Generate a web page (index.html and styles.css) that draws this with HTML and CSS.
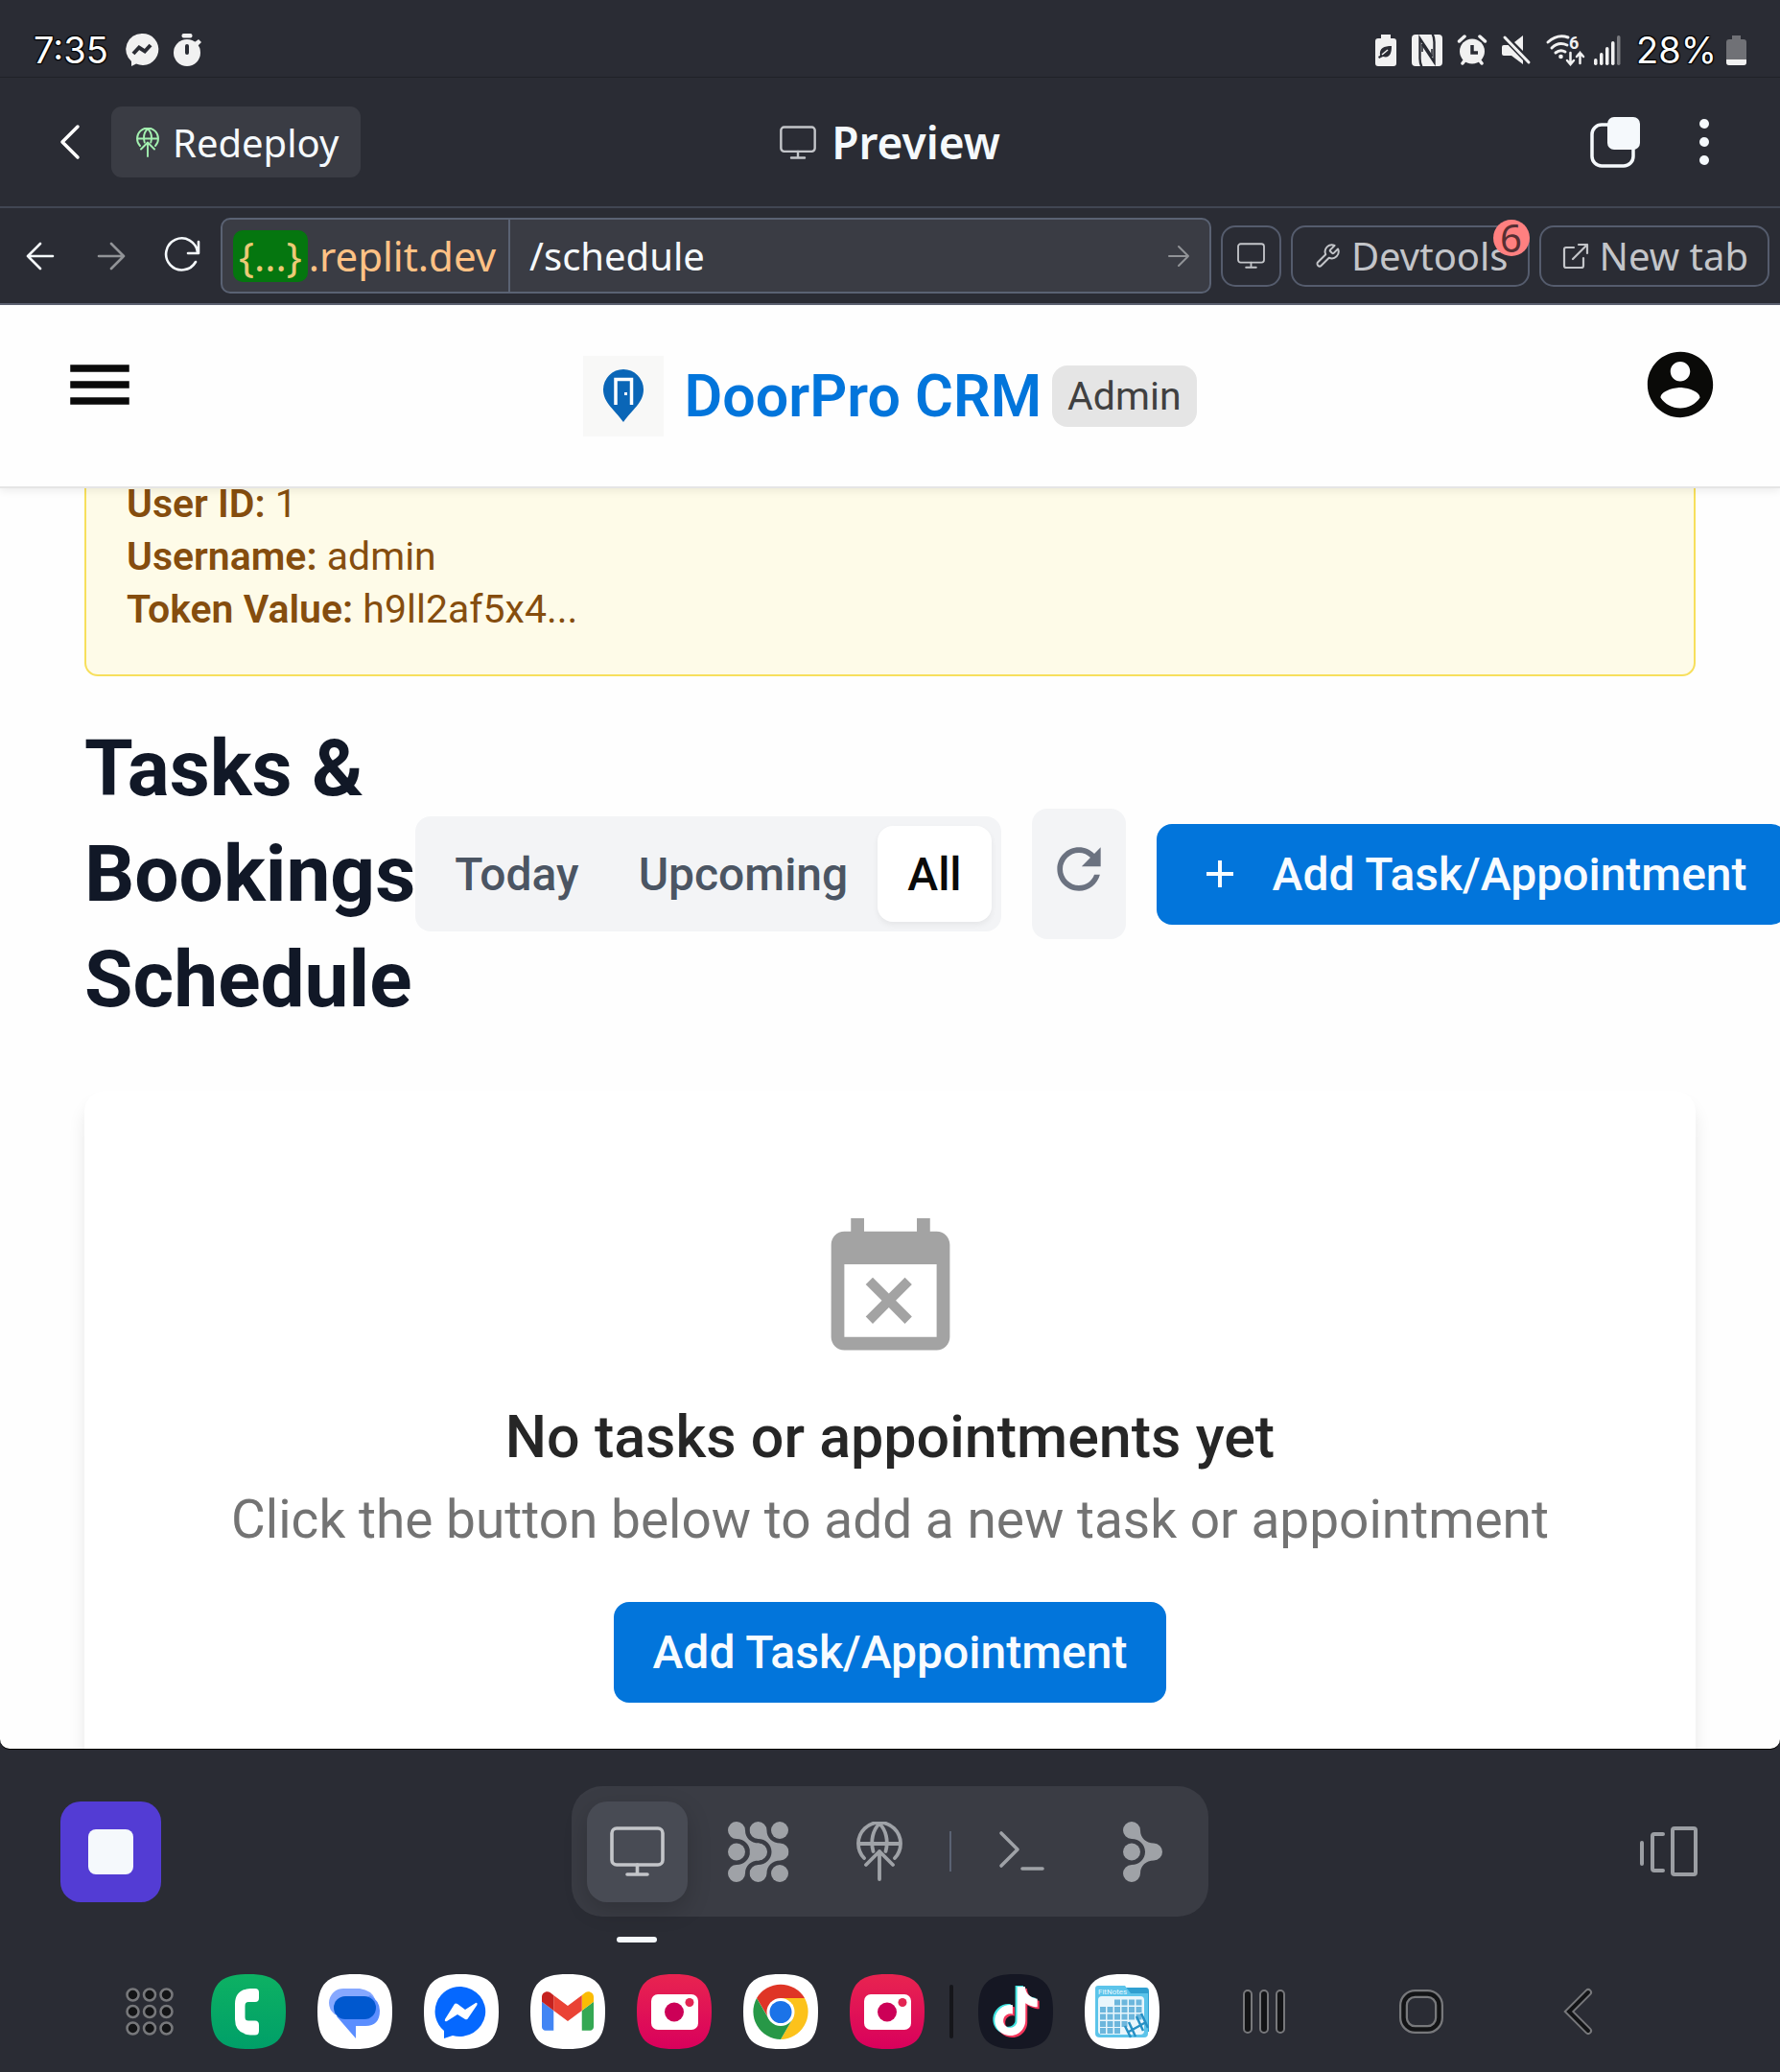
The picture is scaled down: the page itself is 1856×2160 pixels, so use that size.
FILE: index.html
```html
<!DOCTYPE html>
<html lang="en">
<head>
<meta charset="utf-8">
<meta name="viewport" content="width=device-width, initial-scale=1">
<title>Preview - DoorPro CRM</title>
<link rel="stylesheet" href="styles.css">
</head>
<body>
<svg class="defs" aria-hidden="true">
  <symbol id="monitor" viewBox="0 0 57 52"><g fill="none" stroke="currentColor" stroke-width="3.6" stroke-linecap="round"><rect x="2" y="2" width="53" height="38" rx="5"/><path d="M28.500 40v9M18 50h21"/></g></symbol>
  <symbol id="deploy" viewBox="0 0 48 62"><g fill="none" stroke="currentColor" stroke-width="3.800" stroke-linecap="round" stroke-linejoin="round"><path d="M8 38A22 22 0 1 1 40 38M2 23h44M17.500 31C14.500 20 17 9 24 2C31 9 33.500 20 30.500 31M24 31v29M10 45L24 31L38 45"/></g></symbol>
  <symbol id="branch" viewBox="0 0 41 63"><path fill="currentColor" d="M9 0A9 9 0 0 1 18 9C18 17 24 22.500 32 22.500A9 9 0 0 1 32 40.500C24 40.500 18 46 18 54A9 9 0 1 1 9 45C17 45 23 39 23 31.500C23 24 17 18 9 18A9 9 0 1 1 9 0Z"/><circle cx="9" cy="31.500" r="9" fill="currentColor"/></symbol>
  <symbol id="squircle" viewBox="0 0 78 78"><path fill="currentColor" d="M39 0C68 0 78 10 78 39S68 78 39 78 0 68 0 39 10 0 39 0Z"/></symbol>
  <symbol id="note" viewBox="0 0 24 24"><path fill="currentColor" d="M12.525.02c1.310-.02 2.610-.01 3.910-.02.08 1.530.63 3.090 1.750 4.170 1.120 1.110 2.700 1.620 4.240 1.790v4.030c-1.440-.05-2.890-.35-4.200-.97-.57-.26-1.100-.59-1.620-.93-.01 2.920.01 5.840-.02 8.750-.08 1.400-.54 2.790-1.350 3.940-1.310 1.920-3.580 3.170-5.910 3.210-1.430.08-2.860-.31-4.080-1.030-2.020-1.190-3.440-3.370-3.650-5.710-.02-.5-.03-1-.01-1.490.18-1.900 1.120-3.720 2.580-4.960 1.660-1.440 3.980-2.130 6.150-1.720.02 1.480-.04 2.960-.04 4.440-.99-.32-2.150-.23-3.020.37-.63.41-1.110 1.040-1.360 1.750-.21.51-.15 1.070-.14 1.610.24 1.640 1.820 3.020 3.500 2.870 1.120-.01 2.190-.66 2.770-1.610.19-.33.4-.67.41-1.060.1-1.790.06-3.570.07-5.360.01-4.030-.01-8.050.02-12.070z"/></symbol>
  <symbol id="camera-app" viewBox="0 0 78 78"><path fill="url(#cam)" d="M39 0C68 0 78 10 78 39S68 78 39 78 0 68 0 39 10 0 39 0Z"/><rect x="15" y="21" width="49" height="37" rx="7" fill="#fff"/><circle cx="39" cy="39.500" r="10" fill="#cc0057"/><circle cx="55" cy="29.500" r="4.500" fill="#e32553"/></symbol>
  <linearGradient id="cam" x1="0" y1="0" x2="0" y2="1"><stop offset="0" stop-color="#e82450"/><stop offset="1" stop-color="#d9005c"/></linearGradient>
  <linearGradient id="call" x1="0" y1="0" x2="0" y2="1"><stop offset="0" stop-color="#0db163"/><stop offset="1" stop-color="#009f68"/></linearGradient>
</svg>

<header class="status">
  <div class="status-group">
    <span class="status-text">7:35</span>
    <svg class="s-msg" width="34" height="34" viewBox="0 0 34 34"><path fill="#f1f1f1" d="M17 0a16.500 16.500 0 1 1-6 31.500L6 34V29A16.500 16.500 0 0 1 17 0Z"/><path d="M8 21l6-6.500 6 4L26 12" fill="none" stroke="#2a2c34" stroke-width="4"/></svg>
    <svg width="29" height="34" viewBox="0 0 29 34"><g fill="#f1f1f1"><circle cx="14" cy="20" r="14"/><rect x="8.500" y="0" width="11" height="4.500" rx="2"/><path d="M22 9l4-3 3 3-4 4z"/></g><path d="M14 13v7" stroke="#2a2c34" stroke-width="4" stroke-linecap="round"/></svg>
  </div>
  <div class="status-group">
    <svg width="22" height="33" viewBox="0 0 22 33"><path fill="#f1f1f1" d="M6 0h10v4h3q3 0 3 3v23q0 3-3 3H3q-3 0-3-3V7q0-3 3-3h3z"/><path fill="#2a2c34" d="M5 22C4 14 9 12 17 12C17 20 15 25 8 23L4 25L3 23Z"/><path d="M7 21l6-5" stroke="#f1f1f1" stroke-width="1.500"/></svg>
    <svg width="32" height="33" viewBox="0 0 32 33"><rect width="32" height="33" rx="4" fill="#f1f1f1"/><g fill="none" stroke="#2a2c34" stroke-width="2.400"><path d="M10.500 34Q8.500 30 8.500 25V4L21 23"/><path d="M21.500-1Q23.500 3 23.500 8V29L11 10"/><path d="M11 10V18M21 15V23" stroke-width="1.600"/></g></svg>
    <svg width="30" height="32" viewBox="0 0 30 32"><circle cx="15" cy="17.500" r="13" fill="#f1f1f1"/><path d="M15 11v8h6" fill="none" stroke="#2a2c34" stroke-width="3.500"/><path d="M1.500 7L7 2M28.500 7L23 2M5 30l3-4M25 30l-3-4" stroke="#f1f1f1" stroke-width="3.500" stroke-linecap="round"/></svg>
    <svg width="30" height="32" viewBox="0 0 30 32"><path fill="#f1f1f1" d="M22 1V17L13 8ZM2 11H8L22 25V31L10 22H2Q0 22 0 20V13Q0 11 2 11Z"/><path d="M3 3L28 29" stroke="#2a2c34" stroke-width="6"/><path d="M3 3L28 29" stroke="#f1f1f1" stroke-width="3" stroke-linecap="round"/></svg>
    <svg class="s-wifi" width="40" height="34" viewBox="0 0 40 34"><g fill="none" stroke="#f1f1f1" stroke-width="3" stroke-linecap="round"><path d="M2 9Q12 0 23 4M6 15Q13 8 22 12M10 20Q15 16 20 19"/><path d="M25.500 20v11M22 28l3.500 4 3.500-4M35.500 31V20M32 24l3.500-4 3.500 4" stroke-width="2.500"/></g><circle cx="15.500" cy="24" r="2.300" fill="#f1f1f1"/><text x="24" y="16" font-family="Roboto, sans-serif" font-weight="700" font-size="18" fill="#f1f1f1">6</text></svg>
    <svg class="s-signal" width="28" height="31" viewBox="0 0 28 31"><g fill="#f1f1f1"><rect y="24" width="3.500" height="7" rx="1.700"/><rect x="6" y="18" width="3.500" height="13" rx="1.700"/><rect x="12" y="12" width="3.500" height="19" rx="1.700"/><rect x="18" y="6" width="3.500" height="25" rx="1.700"/><rect x="24" width="3.500" height="31" rx="1.700" opacity=".4"/></g></svg>
    <span class="status-text">28%</span>
    <svg class="s-batt" width="21" height="31" viewBox="0 0 21 31"><path fill="#707176" d="M6 0h9v4h3q3 0 3 3v21q0 3-3 3H3q-3 0-3-3V7q0-3 3-3h3z"/><path fill="#f1f1f1" d="M0 25h21v3q0 3-3 3H3q-3 0-3-3z"/></svg>
  </div>
</header>

<div class="titlebar">
  <div class="titlebar-left">
    <button class="icon-btn" aria-label="Back"><svg width="22" height="36" viewBox="0 0 22 36"><path d="M19 2L3 18L19 34" fill="none" stroke="#fff" stroke-width="3.500" stroke-linecap="round" stroke-linejoin="round"/></svg></button>
    <button class="redeploy"><svg class="green" width="24" height="31"><use href="#deploy"/></svg>Redeploy</button>
  </div>
  <h1 class="titlebar-name"><svg width="38" height="35"><use href="#monitor"/></svg>Preview</h1>
  <div class="titlebar-right">
    <button class="icon-btn" aria-label="Tabs"><svg width="52" height="53" viewBox="0 0 52 53"><rect x="2" y="8" width="43" height="43" rx="10" fill="none" stroke="#f5f9fc" stroke-width="3.500"/><rect x="18" y="0" width="34" height="34" rx="7" fill="#f5f9fc"/></svg></button>
    <button class="icon-btn" aria-label="More"><svg width="10" height="48" viewBox="0 0 10 48"><g fill="#f5f9fc"><circle cx="5" cy="5" r="5"/><circle cx="5" cy="24" r="5"/><circle cx="5" cy="43" r="5"/></g></svg></button>
  </div>
</div>

<nav class="toolbar">
  <div class="history">
    <button class="icon-btn" aria-label="Go back"><svg width="38" height="38" viewBox="0 0 38 38"><path d="M6 19H32M19 6L6 19L19 32" fill="none" stroke="#f5f9fc" stroke-width="2.600" stroke-linecap="round" stroke-linejoin="round"/></svg></button>
    <button class="icon-btn" aria-label="Go forward"><svg width="38" height="38" viewBox="0 0 38 38"><path d="M6 19H32M19 6L32 19L19 32" fill="none" stroke="#919397" stroke-width="2.600" stroke-linecap="round" stroke-linejoin="round"/></svg></button>
    <button class="icon-btn" aria-label="Reload"><svg width="38" height="38" viewBox="0 0 38 38"><path d="M36 4V16H25M35 15A16.500 16.500 0 1 0 33 25" fill="none" stroke="#f5f9fc" stroke-width="2.600" stroke-linecap="round" stroke-linejoin="round"/></svg></button>
  </div>
  <div class="url">
    <span class="host"><span class="host-chip">{...}</span>.replit.dev</span>
    <input class="path" aria-label="Path" value="/schedule">
    <button class="icon-btn go" aria-label="Go"><svg width="24" height="24" viewBox="0 0 24 24"><path d="M2 12H22M12 2L22 12L12 22" fill="none" stroke="#919397" stroke-width="2" stroke-linecap="round" stroke-linejoin="round"/></svg></button>
  </div>
  <button class="tool square" aria-label="Device size"><svg width="29" height="27"><use href="#monitor"/></svg></button>
  <button class="tool"><svg width="28" height="28" viewBox="0 0 24 24"><path d="M14.700 6.300a1 1 0 0 0 0 1.400l1.600 1.600a1 1 0 0 0 1.400 0l3.770-3.770a6 6 0 0 1-7.940 7.940l-6.910 6.910a2.120 2.120 0 0 1-3-3l6.910-6.910a6 6 0 0 1 7.940-7.940l-3.760 3.760z" fill="none" stroke="currentColor" stroke-width="1.700" stroke-linejoin="round"/></svg>Devtools<span class="count">6</span></button>
  <button class="tool"><svg width="28" height="28" viewBox="0 0 28 28"><path d="M12 5H4Q2 5 2 7V24Q2 26 4 26H20Q22 26 22 24V16M17 2H26V11M26 2L11 17" fill="none" stroke="currentColor" stroke-width="2.200" stroke-linecap="round" stroke-linejoin="round"/></svg>New tab</button>
</nav>

<div class="app">
  <header class="app-header">
    <button class="icon-btn" aria-label="Menu"><svg width="82" height="82" viewBox="0 0 24 24" fill="#0a0a0a"><path d="M3 18.100h18v-2.200H3zm0-5h18v-2.200H3zm0-7.200v2.200h18V5.900z"/></svg></button>
    <div class="brand">
      <div class="logo"><svg width="42" height="55" viewBox="0 0 42 55"><path fill="#0a66b7" d="M21 0A21 21 0 0 1 42 21C42 35 30 42 21 55C12 42 0 35 0 21A21 21 0 0 1 21 0Z"/><path d="M13 37V10.500H29.500V37" fill="none" stroke="#fff" stroke-width="3.500"/><rect x="22" y="24" width="3" height="3" fill="#fff"/></svg></div>
      <span class="brand-name">DoorPro CRM</span>
      <span class="role">Admin</span>
    </div>
    <button class="icon-btn account" aria-label="Account"><svg width="82" height="82" viewBox="0 0 24 24" fill="#0a0a08"><path d="M12 2C6.480 2 2 6.480 2 12s4.480 10 10 10 10-4.480 10-10S17.520 2 12 2zm0 3c1.660 0 3 1.340 3 3s-1.340 3-3 3-3-1.340-3-3 1.340-3 3-3zm0 14.200c-2.500 0-4.710-1.280-6-3.220.03-1.990 4-3.080 6-3.080 1.990 0 5.970 1.090 6 3.080-1.290 1.940-3.500 3.220-6 3.220z"/></svg></button>
  </header>

  <main class="content">
    <section class="debug">
      <p><b>User ID:</b> 1</p>
      <p><b>Username:</b> admin</p>
      <p><b>Token Value:</b> h9ll2af5x4...</p>
    </section>

    <div class="heading-row">
      <h2>Tasks &amp; Bookings Schedule</h2>
      <div class="actions">
        <div class="segments">
          <button>Today</button>
          <button>Upcoming</button>
          <button class="active">All</button>
        </div>
        <button class="refresh" aria-label="Refresh"><svg width="68" height="68" viewBox="0 0 24 24"><path fill="#6b7280" d="M17.650 6.350C16.200 4.900 14.210 4 12 4c-4.420 0-7.990 3.580-7.990 8s3.570 8 7.990 8c3.730 0 6.840-2.550 7.730-6h-2.080c-.82 2.330-3.040 4-5.650 4-3.310 0-6-2.690-6-6s2.690-6 6-6c1.660 0 3.140.69 4.220 1.780L13 11h7V4l-2.350 2.350z"/></svg></button>
        <button class="primary with-icon"><svg width="28" height="28" viewBox="0 0 28 28"><path d="M14 0V28M0 14H28" stroke="#f8fcff" stroke-width="4"/></svg>Add Task/Appointment</button>
      </div>
    </div>

    <section class="card">
      <svg width="165" height="165" viewBox="0 0 24 24"><path fill="#a3a3a3" d="M9.310 17l2.440-2.440L14.190 17l1.060-1.060-2.440-2.440 2.440-2.440L14.190 10l-2.440 2.440L9.310 10l-1.060 1.060 2.440 2.440-2.440 2.440L9.310 17zM19 3h-1V1h-2v2H8V1H6v2H5c-1.110 0-1.990.9-1.990 2L3 19c0 1.100.89 2 2 2h14c1.100 0 2-.9 2-2V5c0-1.100-.9-2-2-2zm0 16H5V8h14v11z"/></svg>
      <h3>No tasks or appointments yet</h3>
      <p>Click the button below to add a new task or appointment</p>
      <button class="primary">Add Task/Appointment</button>
    </section>
  </main>
</div>

<footer class="dock">
  <button class="stop" aria-label="Stop"><span></span></button>
  <div class="pill">
    <button class="on" aria-label="Preview"><svg width="57" height="52"><use href="#monitor"/></svg></button>
    <button aria-label="Agent"><svg width="63" height="63" viewBox="0 0 63 63"><use href="#branch" width="41" height="63"/><use href="#branch" x="22.500" width="41" height="63"/><circle cx="54" cy="9" r="9" fill="currentColor"/><circle cx="54" cy="54" r="9" fill="currentColor"/></svg></button>
    <button aria-label="Deployments"><svg width="48" height="62"><use href="#deploy"/></svg></button>
    <span class="sep"></span>
    <button aria-label="Shell"><svg width="47" height="42" viewBox="0 0 47 42"><path d="M2 2L19 19L2 36M24 39H45" fill="none" stroke="currentColor" stroke-width="3.600" stroke-linecap="round" stroke-linejoin="round"/></svg></button>
    <button aria-label="Assistant"><svg width="41" height="63"><use href="#branch"/></svg></button>
  </div>
  <button class="icon-btn panels" aria-label="Open panels"><svg width="60" height="52" viewBox="0 0 60 52"><g fill="none" stroke="#9b9ea3" stroke-width="4" stroke-linecap="round"><rect x="34" y="2" width="24" height="48" rx="2"/><path d="M24 8H15Q13 8 13 10V44Q13 46 15 46H24M2 17V39"/></g></svg></button>
</footer>

<nav class="taskbar">
  <div class="apps">
    <button class="icon-btn launcher" aria-label="All apps"><svg width="50" height="50" viewBox="0 0 50 50"><g fill="#131416" stroke="#77787b" stroke-width="2.500"><circle cx="7.500" cy="7.500" r="6"/><circle cx="25" cy="7.500" r="6"/><circle cx="42.500" cy="7.500" r="6"/><circle cx="7.500" cy="25" r="6"/><circle cx="25" cy="25" r="6"/><circle cx="42.500" cy="25" r="6"/><circle cx="7.500" cy="42.500" r="6"/><circle cx="25" cy="42.500" r="6"/><circle cx="42.500" cy="42.500" r="6"/></g></svg></button>
    <button class="icon-btn" aria-label="Phone"><svg width="78" height="78" viewBox="0 0 78 78"><path fill="url(#call)" d="M39 0C68 0 78 10 78 39S68 78 39 78 0 68 0 39 10 0 39 0Z"/><path fill="#fff" d="M41 15H46Q50 15 50 19V25Q50 29 46 29H39Q35.500 29 35.500 33V45Q35.500 48.500 39 48.500H46Q50 48.500 50 53V59Q50 63.500 46 63.500H41Q25 62 25 47V31Q25 16 41 15Z"/></svg></button>
    <button class="icon-btn" aria-label="Messages"><svg width="78" height="78" viewBox="0 0 78 78"><use href="#squircle" color="#fff"/><path fill="#86a8ff" d="M28 15H44Q57 17 60 26L40 47L18 42Q12 37 12 30A15 15 0 0 1 28 15Z"/><path fill="#5b8eff" d="M55 22Q65 28 65 38Q65 54 50 54H40V67L20 44Z"/><rect x="17" y="23" width="44" height="24" rx="12" fill="#0058cf"/></svg></button>
    <button class="icon-btn" aria-label="Messenger"><svg width="78" height="78" viewBox="0 0 78 78"><use href="#squircle" color="#fff"/><path fill="#0568ff" d="M39 13A27 26 0 1 1 30 64L21 67V59A26 26 0 0 1 39 13Z"/><path fill="#fff" d="M22 47L32 31Q33 30 35 31L43 37L54 30Q56 29 55.500 32L46 46Q45 48 43 47L35 42L24 49Q21 50 22 47Z"/></svg></button>
    <button class="icon-btn" aria-label="Gmail"><svg width="78" height="78" viewBox="0 0 78 78"><use href="#squircle" color="#fff"/><svg x="12" y="18" width="54" height="41" viewBox="52 42 88 66"><path fill="#4285f4" d="M58 108h14V74L52 59v43c0 3.320 2.690 6 6 6"/><path fill="#34a853" d="M120 108h14c3.320 0 6-2.690 6-6V59l-20 15"/><path fill="#fbbc04" d="M120 48v26l20-15v-8c0-7.420-8.470-11.650-14.400-7.200"/><path fill="#ea4335" d="M72 74V48l24 18 24-18v26L96 92"/><path fill="#c5221f" d="M52 51v8l20 15V48l-5.600-4.200c-5.940-4.450-14.400-.22-14.400 7.200"/></svg></svg></button>
    <button class="icon-btn" aria-label="Camera"><svg width="78" height="78"><use href="#camera-app"/></svg></button>
    <button class="icon-btn" aria-label="Chrome"><svg width="78" height="78" viewBox="0 0 78 78"><use href="#squircle" color="#fff"/><path fill="#df3526" d="M14 25A29 29 0 0 1 64 25H39L26.500 46Z"/><path fill="#fcc21b" d="M64 25A29 29 0 0 1 39 68L51.500 46.500L52 32L39 25Z"/><path fill="#279847" d="M14 25A29 29 0 0 0 39 68L51.500 46.500L39 52L26.500 46.500Z"/><circle cx="39" cy="39.500" r="14.500" fill="#fff"/><circle cx="39" cy="39.500" r="11.500" fill="#1b73e8"/></svg></button>
    <button class="icon-btn" aria-label="Camera"><svg width="78" height="78"><use href="#camera-app"/></svg></button>
    <span class="apps-sep"></span>
    <button class="icon-btn" aria-label="TikTok"><svg width="78" height="78" viewBox="0 0 78 78"><use href="#squircle" color="#151723"/><use href="#note" x="12" y="12" width="51" height="51" color="#3de3df"/><use href="#note" x="16" y="15" width="51" height="51" color="#f3365b"/><use href="#note" x="14" y="13" width="51" height="51" color="#fff"/></svg></button>
    <button class="icon-btn" aria-label="FitNotes"><svg width="78" height="78" viewBox="0 0 78 78"><use href="#squircle" color="#fff"/><path fill="#2f9fd0" d="M40 14H64Q67 14 67 18V60H40Z"/><path fill="#5cc4ea" d="M14 12H42L48 20H66V62Q66 66 62 66H16Q11 66 11 62V15Q11 12 14 12Z"/><rect x="14" y="23" width="48" height="40" rx="4" fill="#e9f6fc"/><g fill="none" stroke="#6cb6dc" stroke-width="6" stroke-dasharray="6 1.500"><path d="M31 29.500H60M16 37H60M16 44.500H60M16 52H45M16 59H38"/></g><path d="M42 54L48 66M46 50L53 65M54 44L61 59M59 41L66 56M46 60L64 50" stroke="#2790c4" stroke-width="2.500"/><text x="14" y="21" font-family="Roboto, sans-serif" font-size="8" fill="#e9f8ff">FitNotes</text></svg></button>
  </div>
  <div class="sysnav">
    <button class="icon-btn" aria-label="Recents"><svg width="44" height="46" viewBox="0 0 44 46"><g fill="#131416" stroke="#77787b" stroke-width="2"><rect x="1" y="1" width="8" height="44" rx="4"/><rect x="18" y="1" width="8" height="44" rx="4"/><rect x="35" y="1" width="8" height="44" rx="4"/></g></svg></button>
    <button class="icon-btn" aria-label="Home"><svg width="46" height="46" viewBox="0 0 46 46"><g fill="none"><rect x="4.500" y="4.500" width="37" height="37" rx="12" stroke="#77787b" stroke-width="9"/><rect x="4.500" y="4.500" width="37" height="37" rx="12" stroke="#131416" stroke-width="4.500"/></g></svg></button>
    <button class="icon-btn" aria-label="Back"><svg width="32" height="48" viewBox="0 0 32 48"><g fill="none" stroke-linecap="round"><path d="M26 4L6 24L26 44" stroke="#77787b" stroke-width="8"/><path d="M26 4L6 24L26 44" stroke="#131416" stroke-width="4"/></g></svg></button>
  </div>
</nav>
</body>
</html>
```
FILE: styles.css
```css
* { box-sizing: border-box; }

body {
  margin: 0;
  height: 100vh;
  display: flex;
  flex-direction: column;
  overflow: hidden;
  background: #2a2c34;
  color: #f5f9fc;
  font-family: "Noto Sans", sans-serif;
  font-size: 40px;
}

svg { display: block; flex: none; overflow: visible; }
.defs { position: absolute; width: 0; height: 0; }

button {
  margin: 0;
  padding: 0;
  border: 0;
  background: none;
  color: inherit;
  font: inherit;
  white-space: nowrap;
}

h1, h2, h3, p { margin: 0; }
.icon-btn { display: flex; align-items: center; justify-content: center; }

/* Phone status bar */
.status {
  display: flex;
  flex: none;
  justify-content: space-between;
  height: 81px;
  padding: 24px 35px 0;
  border-bottom: 1px solid #202227;
  font-family: Inter, sans-serif;
  font-size: 38px;
}
.status-group { display: flex; align-items: center; gap: 16px; height: 56px; }
.status-text {
  color: #fff;
  text-shadow: 1px 1px 1px #000, -1px -1px 1px #000, 1px -1px 1px #000, -1px 1px 1px #000;
}
.s-msg { margin-left: 2px; }
.s-signal { margin-left: -6px; }
.s-batt { margin-left: -6px; }

/* Workspace title bar */
.titlebar {
  display: grid;
  grid-template-columns: 1fr auto 1fr;
  align-items: center;
  flex: none;
  height: 136px;
  padding: 0 62px;
  border-bottom: 2px solid #414653;
}
.titlebar-left { display: flex; align-items: center; gap: 32px; }
.redeploy {
  display: flex;
  align-items: center;
  gap: 14px;
  height: 74px;
  padding: 0 23px 0 26px;
  border-radius: 11px;
  background: #3a3c44;
}
.green { color: #a3f0b0; }
.titlebar-name {
  display: flex;
  align-items: center;
  gap: 16px;
  font-size: 46px;
  font-weight: 600;
}
.titlebar-name svg { color: #c3c5c9; }
.titlebar-right {
  display: flex;
  justify-content: flex-end;
  align-items: center;
  gap: 62px;
  padding-right: 12px;
}

/* Browser toolbar */
.toolbar {
  display: flex;
  align-items: center;
  gap: 10px;
  flex: none;
  padding: 10px 11px 10px 23px;
  border-bottom: 2px solid #5b6070;
}
.history { display: flex; gap: 36px; margin-right: 11px; }
.url {
  display: flex;
  align-items: center;
  flex: 1;
  min-width: 0;
  height: 79px;
  border: 2px solid #5a6273;
  border-radius: 10px;
  background: #3a3c44;
}
.host {
  display: flex;
  align-items: center;
  flex: none;
  height: 100%;
  padding: 0 13px 0 11px;
  border-right: 2px solid #5a6273;
  color: #ffc285;
  font-size: 42px;
}
.host-chip {
  height: 64px;
  margin-right: 1px;
  padding: 0 6px;
  border-radius: 10px;
  background: #05760f;
  color: #ecca76;
  line-height: 62px;
}
.host-chip { height: 54px; line-height: 54px; }
.path {
  flex: 1;
  min-width: 0;
  padding: 0 0 0 20px;
  border: 0;
  outline: 0;
  background: none;
  color: #f5f9fc;
  font: inherit;
}
.go { padding: 0 20px; }
.tool {
  position: relative;
  display: flex;
  align-items: center;
  gap: 11px;
  height: 64px;
  padding: 0 20px 0 22px;
  border: 2px solid #555c6d;
  border-radius: 15px;
  color: #c3c5c9;
}
.square { padding: 0 15px; }
.count {
  position: absolute;
  top: -8px;
  right: -2px;
  width: 38px;
  height: 38px;
  border-radius: 50%;
  background: #ff8080;
  color: #572f33;
  font-size: 40px;
  line-height: 38px;
  text-align: center;
}

/* Previewed app */
.app {
  display: flex;
  flex-direction: column;
  flex: 1;
  min-height: 0;
  overflow: hidden;
  border-radius: 0 0 10px 10px;
  background: #fefefe;
  box-shadow: 0 1px 0 #000;
  font-family: Roboto, sans-serif;
  color: #0a0a0a;
}
.app-header {
  position: relative;
  z-index: 1;
  display: grid;
  grid-template-columns: 1fr auto 1fr;
  align-items: center;
  flex: none;
  height: 191px;
  padding: 0 63px;
  border-bottom: 2px solid #e5e5e5;
  background: #fefefe;
  box-shadow: 0 3px 8px rgba(0, 0, 0, .07);
}
.app-header .icon-btn { justify-self: start; padding-bottom: 24px; }
.app-header .account { justify-self: end; }
.brand { display: flex; align-items: center; }
.logo {
  display: flex;
  align-items: center;
  justify-content: center;
  width: 84px;
  height: 84px;
  margin-right: 21px;
  background: #f8f8f7;
}
.brand-name { margin-right: 11px; color: #0275db; font-size: 61px; font-weight: 600; }
.role {
  height: 64px;
  padding: 0 16px;
  border-radius: 16px;
  background: #e5e5e5;
  color: #404040;
  font-size: 41px;
  line-height: 64px;
}

.content { padding: 0 88px; }
.debug {
  margin-top: -61px;
  padding: 48px 42px 40px;
  border: 2px solid #f7df5c;
  border-radius: 14px;
  background: #fefbe8;
  color: #854d0e;
  font-size: 41px;
  line-height: 55px;
}
.debug b { font-weight: 600; }

.heading-row { display: flex; align-items: center; margin: 41px 0 61px; }
h2 { color: #111827; font-size: 82px; line-height: 110px; font-weight: 700; }
.actions { display: flex; align-items: center; flex: none; gap: 32px; font-size: 48px; font-weight: 500; }
.segments {
  display: flex;
  padding: 10px;
  border-radius: 16px;
  background: #f3f4f6;
  color: #4b5563;
}
.segments button { height: 100px; padding: 0 31px; border-radius: 16px; }
.segments .active { background: #fff; color: #0a0a0a; box-shadow: 0 3px 6px rgba(0, 0, 0, .06); }
.refresh { padding: 29px 15px 39px; border-radius: 16px; background: #f3f4f6; }
.primary {
  display: flex;
  align-items: center;
  height: 105px;
  padding: 0 41px;
  border-radius: 16px;
  background: #0275db;
  color: #f8fcff;
  font-size: 48px;
  font-weight: 500;
}
.with-icon { gap: 41px; padding-left: 52px; }

.card {
  display: flex;
  flex-direction: column;
  align-items: center;
  padding: 126px 42px;
  border-radius: 22px;
  background: #fff;
  box-shadow: 0 14px 18px rgba(0, 0, 0, .09);
}
h3 { margin-top: 28px; color: #262626; font-size: 61px; line-height: 84px; font-weight: 500; }
.card p { margin: 3px 0 45px; color: #737373; font-size: 55px; line-height: 82px; }

/* Workspace dock */
.dock {
  display: grid;
  grid-template-columns: 1fr auto 1fr;
  align-items: center;
  flex: none;
  height: 214px;
  padding: 0 63px;
}
.stop {
  display: flex;
  align-items: center;
  justify-content: center;
  width: 105px;
  height: 105px;
  border-radius: 21px;
  background: #533cd4;
}
.stop span { width: 47px; height: 47px; border-radius: 8px; background: #f5f9fc; }
.pill {
  display: flex;
  align-items: center;
  gap: 21px;
  height: 136px;
  padding: 0 16px;
  border-radius: 32px;
  background: #3a3c44;
  color: #9fa2a7;
}
.pill button {
  position: relative;
  display: flex;
  align-items: center;
  justify-content: center;
  width: 105px;
  height: 105px;
  border-radius: 21px;
}
.pill .on { background: #484b54; color: #c3c5c9; box-shadow: 0 8px 24px rgba(0, 0, 0, .18); }
.pill .on::after {
  content: "";
  position: absolute;
  top: 141px;
  left: 31px;
  width: 42px;
  height: 6px;
  border-radius: 3px;
  background: #f5f9fc;
}
.sep { width: 2px; height: 42px; background: #5a6273; }
.panels { justify-self: end; margin-right: 23px; }

/* Phone taskbar */
.taskbar {
  display: flex;
  justify-content: space-between;
  flex: none;
  height: 123px;
  padding: 21px 128px 0 131px;
}
.apps { display: flex; align-items: center; gap: 33px; height: 78px; }
.launcher { margin-right: 6px; }
.apps-sep { width: 4px; height: 56px; margin: 0 -7px; border-radius: 2px; background: #15161a; }
.sysnav { display: flex; height: 78px; }
.sysnav .icon-btn { width: 164px; }
```
